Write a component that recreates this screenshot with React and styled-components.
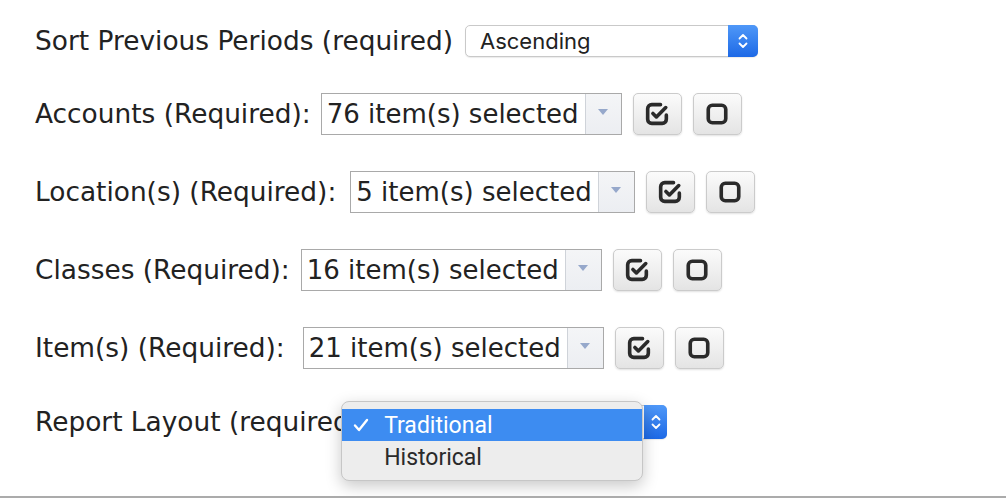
import React from "react";
import styled, { createGlobalStyle } from "styled-components";

const GlobalStyle = createGlobalStyle`
  html, body {
    margin: 0;
    padding: 0;
    background: #fff;
  }
  body {
    font-family: "DejaVu Sans", Verdana, sans-serif;
    color: #222;
  }
`;

const Page = styled.div`
  height: 498px;
  box-sizing: border-box;
  border-bottom: 2px solid #ababab;
  overflow: hidden;
`;

const Form = styled.div`
  display: flex;
  flex-direction: column;
  gap: 36px;
  padding: 25px 0 0 35px;
`;

const Row = styled.div`
  display: flex;
  align-items: center;
`;

const Label = styled.span`
  font-size: 26.4px;
  line-height: 1.2;
  color: #222;
  white-space: nowrap;
  margin-right: ${(p) => p.$gap ?? 13}px;
`;

const SelectWrap = styled.div`
  position: relative;
  display: flex;
  width: ${(p) => p.$width}px;
  height: ${(p) => p.$height}px;
  box-sizing: border-box;
  border: 1px solid #c9c9c9;
  border-radius: 5px;
  background: #fff;
  box-shadow: 0 1px 1px rgba(0, 0, 0, 0.08);
`;

const SelectText = styled.span`
  flex: 1;
  display: flex;
  align-items: center;
  padding-left: 14px;
  font-family: Inter, "Noto Sans", sans-serif;
  font-size: 22px;
  color: #222;
  visibility: ${(p) => (p.$covered ? "hidden" : "visible")};
`;

const Stepper = styled.span`
  width: ${(p) => p.$width}px;
  margin: -1px -1px -1px 0;
  border-radius: 0 5px 5px 0;
  background: linear-gradient(#4f98f8, #1d69e6);
  display: flex;
  align-items: center;
  justify-content: center;
`;

const MultiBox = styled.div`
  display: flex;
  height: 42px;
  box-sizing: border-box;
  border: 1px solid #a9a9a9;
  background: #fff;
`;

const MultiText = styled.span`
  display: flex;
  align-items: center;
  padding: 0 6px 0 5px;
  font-size: 26px;
  color: #222;
  white-space: nowrap;
`;

const MultiArrow = styled.span`
  width: 36px;
  border-left: 1px solid #cfd3d9;
  background: linear-gradient(#f4f5f7, #eceef2);
  display: flex;
  align-items: center;
  justify-content: center;
  padding-bottom: 4px;
  box-sizing: border-box;
`;

const Triangle = styled.span`
  width: 0;
  height: 0;
  border-left: 5px solid transparent;
  border-right: 5px solid transparent;
  border-top: 6px solid #96a8cb;
`;

const IconButton = styled.button`
  width: 49px;
  height: 42px;
  margin-left: 11px;
  padding: 0;
  border: 1px solid #cbcbcb;
  border-radius: 5px;
  background: linear-gradient(#fbfbfb, #e4e4e4);
  box-shadow: 0 1px 2px rgba(0, 0, 0, 0.12);
  display: flex;
  align-items: center;
  justify-content: center;
  cursor: pointer;
`;

const Menu = styled.div`
  position: absolute;
  left: -29px;
  top: -5px;
  width: 302px;
  height: 80px;
  box-sizing: border-box;
  padding-top: 7px;
  background: #ededed;
  border: 1px solid #c6c6c6;
  border-radius: 8px;
  box-shadow: 0 5px 16px rgba(0, 0, 0, 0.22);
  overflow: hidden;
  z-index: 2;
`;

const MenuItem = styled.div`
  position: relative;
  height: 32px;
  display: flex;
  align-items: center;
  padding-left: 42px;
  font-family: Roboto, "Liberation Sans", sans-serif;
  font-size: 23px;
  color: ${(p) => (p.$active ? "#fff" : "#2a2a2a")};
  background: ${(p) => (p.$active ? "#3d8cf1" : "transparent")};
`;

const MenuCheck = styled.span`
  position: absolute;
  left: 11px;
  top: 9px;
  display: flex;
`;

const Chevrons = () => (
  <svg width="12" height="22" viewBox="0 0 12 22" fill="none">
    <path d="M2.5 8.5L6 5l3.5 3.5" stroke="#fff" strokeWidth="1.8" strokeLinecap="round" strokeLinejoin="round" />
    <path d="M2.5 13.5L6 17l3.5-3.5" stroke="#fff" strokeWidth="1.8" strokeLinecap="round" strokeLinejoin="round" />
  </svg>
);

const CheckAllIcon = () => (
  <svg width="28" height="28" viewBox="0 0 24 24" fill="none" stroke="#2a2a2a" strokeWidth="3.1" strokeLinecap="round" strokeLinejoin="round">
    <path d="M15 4H7.5A3.5 3.5 0 0 0 4 7.5v9A3.5 3.5 0 0 0 7.5 20h9a3.5 3.5 0 0 0 3.5-3.5V13" />
    <path d="M8.5 11.5l3 3L19.5 6.5" />
  </svg>
);

const UncheckAllIcon = () => (
  <svg width="28" height="28" viewBox="0 0 24 24" fill="none" stroke="#2a2a2a" strokeWidth="3.1">
    <rect x="4.5" y="4.5" width="15" height="15" rx="3.5" />
  </svg>
);

const MenuTick = () => (
  <svg width="16" height="14" viewBox="0 0 16 14" fill="none">
    <path d="M2 7.5l4 4.5L14 2" stroke="#fff" strokeWidth="2.4" strokeLinecap="round" strokeLinejoin="round" />
  </svg>
);

const MultiSelect = ({ label, count, gap }) => (
  <Row>
    <Label $gap={gap}>{label}</Label>
    <MultiBox>
      <MultiText>{count} item(s) selected</MultiText>
      <MultiArrow>
        <Triangle />
      </MultiArrow>
    </MultiBox>
    <IconButton title="Check all">
      <CheckAllIcon />
    </IconButton>
    <IconButton title="Uncheck all">
      <UncheckAllIcon />
    </IconButton>
  </Row>
);

const filters = [
  { label: "Accounts (Required):", count: 76, gap: 10 },
  { label: "Location(s) (Required):", count: 5, gap: 14 },
  { label: "Classes (Required):", count: 16, gap: 11 },
  { label: "Item(s) (Required):", count: 21, gap: 18 },
];

const App = () => {
  return (
    <Page>
      <GlobalStyle />
      <Form>
        <Row>
          <Label $gap={12}>Sort Previous Periods (required)</Label>
          <SelectWrap $width={293} $height={32}>
            <SelectText>Ascending</SelectText>
            <Stepper $width={30}>
              <Chevrons />
            </Stepper>
          </SelectWrap>
        </Row>

        {filters.map((f) => (
          <MultiSelect key={f.label} label={f.label} count={f.count} gap={f.gap} />
        ))}

        <Row>
          <Label $gap={9}>Report Layout (required)</Label>
          <SelectWrap $width={298} $height={34}>
            <SelectText $covered>Traditional</SelectText>
            <Stepper $width={23}>
              <Chevrons />
            </Stepper>
            <Menu>
              <MenuItem $active>
                <MenuCheck>
                  <MenuTick />
                </MenuCheck>
                Traditional
              </MenuItem>
              <MenuItem>Historical</MenuItem>
            </Menu>
          </SelectWrap>
        </Row>
      </Form>
    </Page>
  );
};

export default App;
